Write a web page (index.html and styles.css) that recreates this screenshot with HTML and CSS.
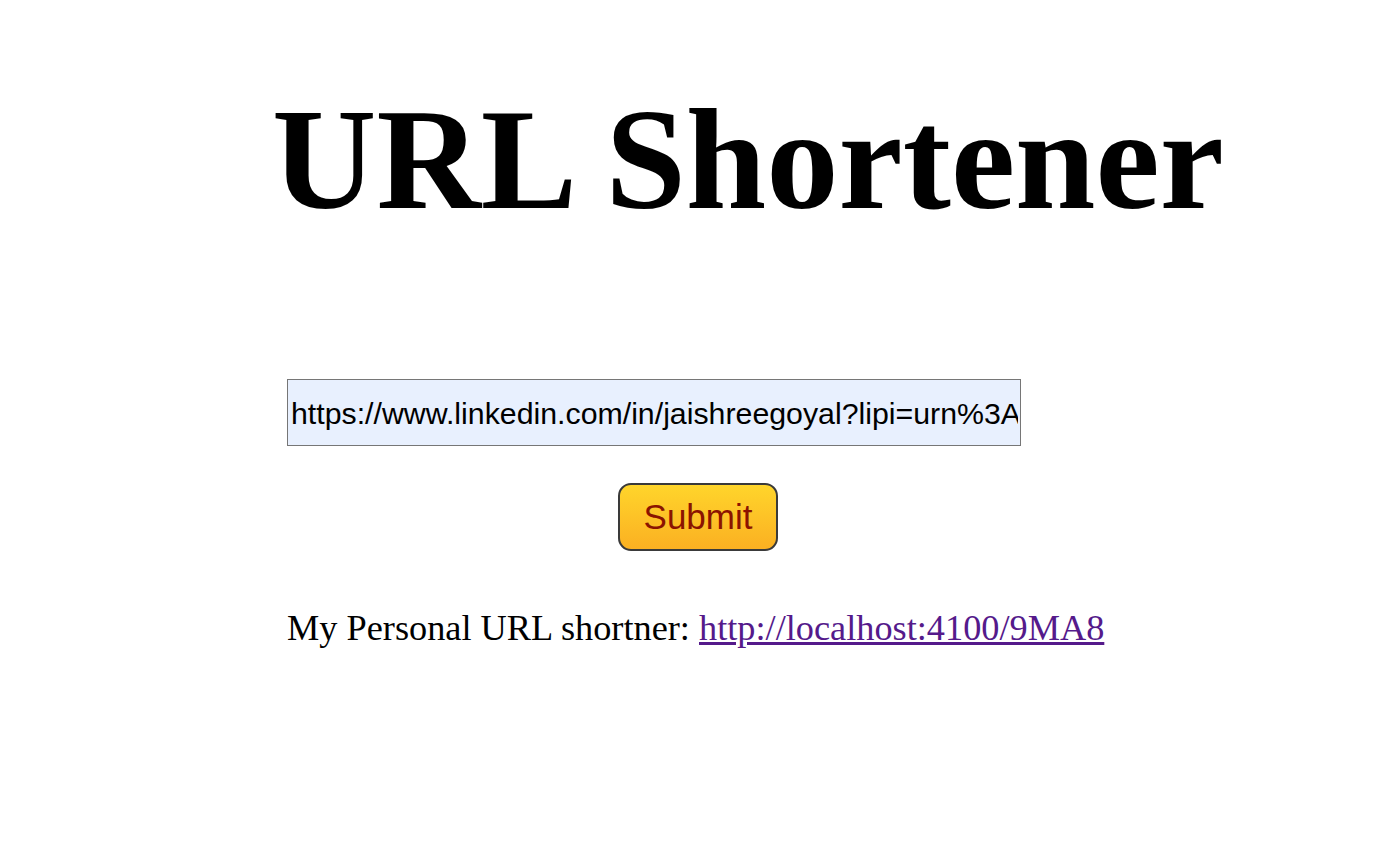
FILE: index.html
```html
<!DOCTYPE html>
<html lang="en">
<head>
<meta charset="utf-8">
<title>URL Shortener</title>
<link rel="stylesheet" href="styles.css">
</head>
<body>
<main class="page">
  <h1 class="title">URL Shortener</h1>
  <form class="form">
    <input class="url-input" type="text" value="https://www.linkedin.com/in/jaishreegoyal?lipi=urn%3A%2F%2Fli%3Apage">
    <div class="actions">
      <button class="submit" type="button">Submit</button>
    </div>
  </form>
  <p class="result">My Personal URL shortner: <a class="short-link" href="#">http://localhost:4100/9MA8</a></p>
</main>
</body>
</html>
```

FILE: styles.css
```css
html, body {
  margin: 0;
  padding: 0;
  background: #ffffff;
}

body {
  font-family: "Liberation Serif", "Times New Roman", serif;
  color: #000000;
}

.page {
  display: flex;
  flex-direction: column;
}

.title {
  margin: 76px 0 0 272px;
  font-size: 144.6px;
  font-weight: bold;
  line-height: normal;
  white-space: nowrap;
}

.form {
  display: flex;
  flex-direction: column;
  margin-top: 137px;
}

.url-input {
  box-sizing: border-box;
  width: 734px;
  height: 67px;
  margin-left: 287px;
  padding: 2px 2px 0 3px;
  border: 1px solid #767676;
  border-radius: 0;
  background: #e8f0fe;
  font-family: "Liberation Sans", Arial, sans-serif;
  font-size: 30.3px;
  color: #000000;
  outline: none;
}

.actions {
  display: flex;
  justify-content: center;
  margin-top: 37px;
  padding-left: 5px;
}

.submit {
  box-sizing: border-box;
  width: 160px;
  height: 68px;
  border: 2px solid #3a3a3a;
  border-radius: 13px;
  background: linear-gradient(to bottom, #ffd52b, #fbb022);
  color: #8b1300;
  font-family: "Liberation Sans", Arial, sans-serif;
  font-size: 35px;
  padding: 0;
  cursor: pointer;
}

.result {
  margin: 56px 0 0 287px;
  font-size: 36.3px;
  line-height: normal;
}

.short-link {
  color: #551a8b;
  text-decoration: underline;
}
```
